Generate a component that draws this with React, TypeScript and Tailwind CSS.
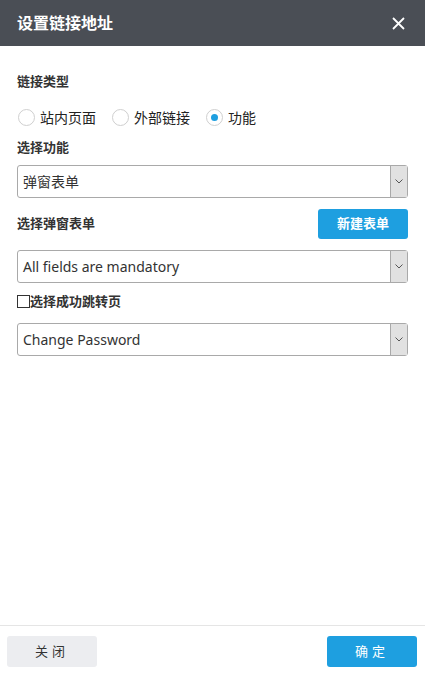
import { useState } from "react";

const font = { fontFamily: '"Noto Sans", "Noto Sans CJK SC", sans-serif' };

function FakeSelect({ value }: { value: string }) {
  return (
    <div className="flex h-[33px] w-full items-stretch rounded-[3px] border border-[#a9a9a9] bg-white">
      <div className="flex flex-1 items-center pl-[5px] text-[14px] text-[#333]">{value}</div>
      <div className="flex w-[17px] items-center justify-center border-l border-[#a9a9a9] bg-[#e1e1e1]">
        <svg width="8" height="5" viewBox="0 0 8 5" fill="none">
          <path d="M0.5 0.5L4 4L7.5 0.5" stroke="#555" strokeWidth="1" />
        </svg>
      </div>
    </div>
  );
}

function Radio({ label, checked }: { label: string; checked?: boolean }) {
  return (
    <label className="flex items-center gap-[5px]">
      <span className="flex h-[17px] w-[17px] items-center justify-center rounded-full border border-[#cfcfcf] bg-white">
        {checked && <span className="h-[7px] w-[7px] rounded-full bg-[#1e9fe0]" />}
      </span>
      <span className="text-[14px] leading-[20px] text-[#222]">{label}</span>
    </label>
  );
}

export default function App() {
  const [jump] = useState(false);
  return (
    <div className="flex h-[676px] w-[425px] flex-col bg-white" style={font}>
      {/* title bar */}
      <div className="flex h-[46px] items-center justify-between bg-[#4a4e55] pl-[17px] pr-[20px]">
        <h1 className="text-[16px] font-bold text-white">设置链接地址</h1>
        <svg width="13" height="13" viewBox="0 0 13 13">
          <path d="M1 1L12 12M12 1L1 12" stroke="white" strokeWidth="1.8" />
        </svg>
      </div>

      <div className="flex flex-1 flex-col px-[17px] pt-[26px]">
        <div className="text-[13px] font-bold text-[#333]">链接类型</div>

        <div className="mt-[16px] flex items-center gap-[16px] pl-[1px]">
          <Radio label="站内页面" />
          <Radio label="外部链接" />
          <Radio label="功能" checked />
        </div>

        <div className="mt-[10px] text-[13px] font-bold text-[#333]">选择功能</div>
        <div className="mt-[8px]">
          <FakeSelect value="弹窗表单" />
        </div>

        <div className="mt-[11px] flex items-center justify-between">
          <div className="text-[13px] font-bold text-[#333]">选择弹窗表单</div>
          <button className="h-[30px] w-[90px] rounded-[3px] bg-[#1e9fe0] text-[13px] font-bold text-white">
            新建表单
          </button>
        </div>
        <div className="mt-[11px]">
          <FakeSelect value="All fields are mandatory" />
        </div>

        <label className="mt-[9px] flex items-center">
          <span className="h-[13px] w-[13px] border border-[#333] bg-white">{jump && "✓"}</span>
          <span className="text-[13px] font-bold text-[#333]">选择成功跳转页</span>
        </label>
        <div className="mt-[11px]">
          <FakeSelect value="Change Password" />
        </div>
      </div>

      {/* footer */}
      <div className="flex h-[51px] items-start justify-between border-t border-[#e5e5e5] px-[7px] pt-[10px]">
        <button className="h-[31px] w-[90px] rounded-[3px] bg-[#ecedf0] text-[13px] tracking-[4px] text-[#333]">
          关闭
        </button>
        <button className="mr-[1px] h-[31px] w-[90px] rounded-[3px] bg-[#1e9fe0] text-[13px] tracking-[4px] text-white">
          确定
        </button>
      </div>
    </div>
  );
}
